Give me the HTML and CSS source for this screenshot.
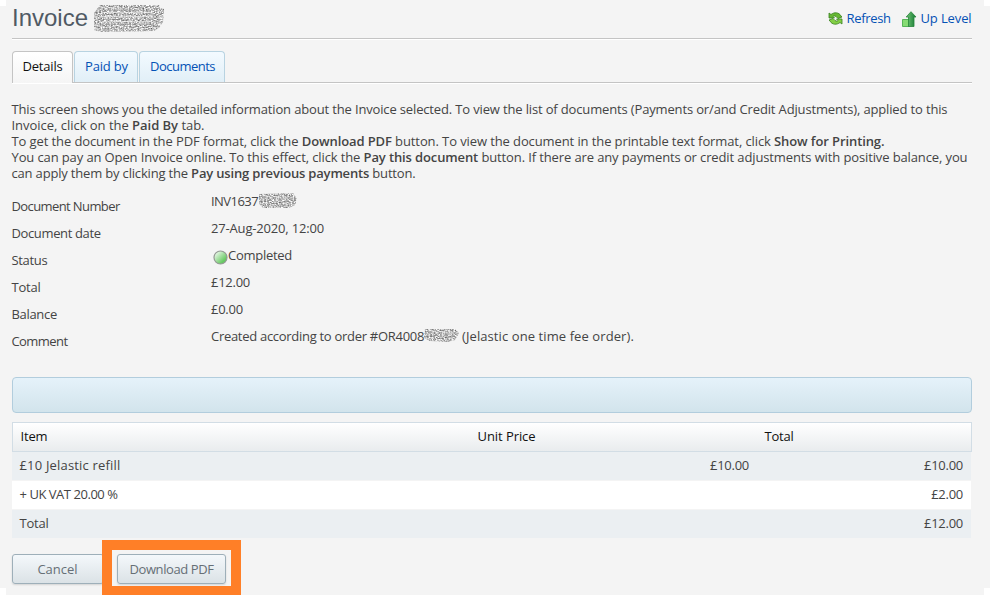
FILE: index.html
```html
<!DOCTYPE html>
<html lang="en">
<head>
<meta charset="utf-8">
<title>Invoice</title>
<link rel="stylesheet" href="styles.css">
</head>
<body>
<svg class="defs" width="0" height="0" aria-hidden="true">
  <defs>
    <filter id="grain" x="0" y="0" width="1" height="1" color-interpolation-filters="sRGB">
      <feTurbulence type="fractalNoise" baseFrequency="0.6 0.85" numOctaves="2" seed="8"/>
      <feColorMatrix values="1.1 0 0 0 0.2  1.1 0 0 0 0.2  1.1 0 0 0 0.2  0 0 0 0 1"/>
      <feComposite in2="SourceGraphic" operator="in"/>
    </filter>
  </defs>
</svg>
<main class="page">
  <header class="top">
    <h1>Invoice</h1>
    <svg class="mask-title" width="72" height="28" viewBox="0 0 72 28">
      <path d="M7 1H66L67 4L71 5L70 18L66 24L61 27L8 28L1 26V9Z" filter="url(#grain)"/>
      <path class="gap" d="M8 8.500H60M7 12.500H60M10 17.500H59"/>
      <path class="streak" d="M8 6.500H60M5 10.500H59M7 15.500H61M9 20.500H61M5.500 17V25"/>
    </svg>
    <nav class="actions">
      <a class="refresh"><svg width="15" height="13" viewBox="0 0 15 13"><path d="M1 1L3 2.5C6 0 11 0 13 4L14 5L10 6.5L8 4.5C6.500 3.500 5.500 4 5 4.500L6.500 6L1 6Z" fill="#66b832" stroke="#38801f" stroke-width=".8"/><path d="M14 12L12 10.500C9 13 4 13 2 9L1 8L5 6.500L7 8.500C8.500 9.500 9.500 9 10 8.500L8.500 7H14Z" fill="#83cf45" stroke="#38801f" stroke-width=".8"/></svg><span class="t-refresh">Refresh</span></a>
      <a class="up"><svg width="15" height="16" viewBox="0 0 15 16"><defs><linearGradient id="ar" x1="0" x2="1"><stop offset="0" stop-color="#75c878"/><stop offset="1" stop-color="#137832"/></linearGradient></defs><path d="M.5 8.500H7V15.500H.5Z" fill="#86dc73" stroke="#57b458"/><path d="M9 .7L14 6H12V15.500H6.500V6H4.200Z" fill="url(#ar)" stroke="#27853a" stroke-width=".8"/></svg><span class="t-up">Up Level</span></a>
    </nav>
  </header>
  <nav class="tabs">
    <a class="tab active t-details">Details</a>
    <a class="tab paid t-paid">Paid by</a>
    <a class="tab docs t-docs">Documents</a>
  </nav>
  <section class="intro">
    <div class="l1">This screen shows you the detailed information about the Invoice selected. To view the list of documents (Payments or/and Credit Adjustments), applied to this</div>
    <div class="l2">Invoice, click on the <b>Paid By</b> tab.</div>
    <div class="l3">To get the document in the PDF format, click the <b>Download PDF</b> button. To view the document in the printable text format, click <b>Show for Printing.</b></div>
    <div class="l4">You can pay an Open Invoice online. To this effect, click the <b>Pay this document</b> button. If there are any payments or credit adjustments with positive balance, you</div>
    <div class="l5">can apply them by clicking the <b>Pay using previous payments</b> button.</div>
  </section>
  <dl class="fields">
    <dt class="t-num">Document Number</dt>
    <dd><span class="t-inv">INV1637</span><svg class="mask-number" width="39" height="15" viewBox="0 0 39 15"><path d="M1 1L35 0L39 6L37 12L31 15H5L1 11Z" filter="url(#grain)"/><path class="streak" d="M4 3L12 10M11 2L19 9M21 2L28 9M29 1L36 10M6 12H30"/></svg></dd>
    <dt class="t-date">Document date</dt>
    <dd class="t-day">27-Aug-2020, 12:00</dd>
    <dt class="t-status">Status</dt>
    <dd><svg class="dot" width="15" height="15" viewBox="0 0 15 15"><defs><linearGradient id="ok" x1="0" y1="0" x2="1" y2="1"><stop offset=".15" stop-color="#e7f7e6"/><stop offset=".75" stop-color="#67c962"/></linearGradient></defs><circle cx="7.500" cy="7.500" r="6.500" fill="url(#ok)" stroke="#939a93" stroke-width="1.200"/></svg><span class="t-comp">Completed</span></dd>
    <dt class="t-total">Total</dt>
    <dd class="t-money">£12.00</dd>
    <dt class="t-status">Balance</dt>
    <dd class="t-money">£0.00</dd>
    <dt class="t-comment">Comment</dt>
    <dd><span class="t-order">Created according to order #OR4008</span><svg class="mask-order" width="35" height="15" viewBox="0 0 35 15"><path d="M1 1H31L35 5L31 12L24 14L6 13L0 10Z" filter="url(#grain)"/><path class="streak" d="M4 3L11 11M12 2L19 12M21 3L27 12M7 8H29"/></svg><span class="t-fee">(Jelastic one time fee order).</span></dd>
  </dl>
  <div class="panel"></div>
  <section class="items">
    <div class="row head"><span class="t-item">Item</span><span class="t-unit">Unit Price</span><span class="t-total">Total</span></div>
    <div class="row"><span class="t-refill">£10 Jelastic refill</span><span class="t-money">£10.00</span><span class="t-money">£10.00</span></div>
    <div class="row even"><span class="t-vat">+ UK VAT 20.00 %</span><span></span><span class="t-money">£2.00</span></div>
    <div class="row"><span class="t-total">Total</span><span></span><span class="t-money">£12.00</span></div>
  </section>
  <div class="buttons">
    <button class="cancel">Cancel</button>
    <div class="highlight"><button class="download">Download PDF</button></div>
  </div>
</main>
</body>
</html>
```
FILE: styles.css
```css
* { box-sizing: border-box; }
html, body { height: 595px; overflow: hidden; }
body {
  margin: 0;
  font: 13px/16px "Open Sans", "Liberation Sans", sans-serif;
  color: #444;
  background:
    linear-gradient(#fff, #fff) 0 0 / 6px 6px no-repeat,
    linear-gradient(#fff, #fff) 0 588px / 6px 7px no-repeat,
    linear-gradient(#fff, #fff) 984px 0 / 6px 6px no-repeat,
    linear-gradient(#fff, #fff) 984px 588px / 6px 7px no-repeat,
    #f4f4f4;
}
svg { display: block; flex: none; }
.defs { position: absolute; }
.streak { fill: none; stroke: #808080; stroke-opacity: .4; stroke-width: 1; stroke-dasharray: 2 1; }
.gap { fill: none; stroke: #eee; stroke-opacity: .6; }
b { font-weight: 600; }
.page { width: 960px; margin-left: 12px; }

.top { display: flex; height: 39px; border-bottom: 1px solid #c4c4c4; box-shadow: 0 1px #fff; }
h1 { margin: 3px 0 0; width: 81px; font: 24px/30px "Liberation Sans", Arial, sans-serif; color: #505a64; }
.mask-title { margin-top: 4px; }
.actions { display: flex; margin-left: auto; color: #0452b5; white-space: nowrap; }
.actions a { display: flex; }
.actions span { margin: 10px 0 0 -.5px; }
.refresh { width: 74px; }
.refresh svg { margin: 12px 4px 0 0; }
.up { width: 70px; }
.up svg { margin: 11px 4px 0 0; }

.tabs { display: flex; gap: 1px; height: 32px; margin-top: 12px; border-bottom: 1px solid #c4c4c4; box-shadow: 0 1px #fff; }
.tab { height: 31px; padding-left: 10px; line-height: 29px; border: 1px solid #b8d3e1; border-bottom: 0; border-radius: 4px 4px 0 0; background: linear-gradient(#f3faff, #e1eff7); color: #0452b5; }
.tab.active { width: 61px; height: 32px; padding-left: 9.500px; border-color: #c4c4c4; background: linear-gradient(#fff, #f5f5f5); color: #111; }
.tab.paid { width: 64px; }
.tab.docs { width: 86px; }

.intro { margin: 18px 0 0 -.5px; white-space: nowrap; }
.fields { display: grid; grid-template-columns: 199px 1fr; grid-auto-rows: 27px; margin: 12px 0 0; white-space: nowrap; }
.fields dt { padding-top: 5px; margin-left: -.5px; }
.fields dd { display: flex; margin: 0; }
.t-inv { width: 47px; }
.t-order { width: 213px; }
.t-fee { margin-left: 3px; }
.dot { margin: 3px 1px 0 1.500px; }
.t-comp { margin-left: -.5px; }

.panel { height: 36px; margin-top: 22px; border: 1px solid #b2cddd; border-radius: 4px; background: linear-gradient(#e5f2fa, #d2e4ec); }
.items { margin-top: 9px; }
.row { display: grid; grid-template-columns: 457px 288px 214px; width: 959px; height: 28px; margin-bottom: 1px; background: #ebeff2; line-height: 26px; }
.row span { padding: 0 8px; text-align: right; }
.row span:first-child { padding-left: 7.500px; text-align: left; }
.row.even { background: #fff; }
.row.head { grid-template-columns: 457px 287px 214px; width: 960px; height: 30px; margin-bottom: 0; border: 1px solid #d2dde5; background: linear-gradient(#fff, #e9ecee); color: #111; }
.row.head span { padding-left: 7.500px; text-align: left; }

.buttons { display: flex; height: 55px; margin-top: 2px; }
.buttons button { height: 30px; padding: 0; border: 1px solid #9eafb9; border-radius: 3px; background: linear-gradient(#f4f8fb, #dbe2e6); box-shadow: 0 1px 2px #0002; font: inherit; color: #666f76; }
.buttons .cancel { flex: none; width: 92px; margin: 14px -2px 0 0; padding-right: 1px; }
.highlight { position: relative; flex: none; width: 139px; height: 56px; padding: 4px 5px; border: 10px solid #ff7f27; }
.buttons .download { width: 109px; letter-spacing: -.41px; }

.l1 { letter-spacing: -.15px; }
.l2 { letter-spacing: -.027px; }
.l3 { letter-spacing: -.102px; }
.l4 { letter-spacing: -.119px; }
.l5 { letter-spacing: -.177px; }
.t-refresh, .t-status { letter-spacing: -.32px; }
.t-up { letter-spacing: -.12px; }
.t-details, .t-paid { letter-spacing: -.18px; }
.t-docs { letter-spacing: -.51px; }
.t-num { letter-spacing: -.6px; }
.t-date { letter-spacing: -.37px; }
.t-day { letter-spacing: -.17px; }
.t-inv { letter-spacing: -.55px; }
.t-comp, .t-money { letter-spacing: -.27px; }
.t-comment { letter-spacing: -.57px; }
.t-order { letter-spacing: -.29px; }
.t-fee { letter-spacing: .09px; }
.t-item { letter-spacing: -.15px; }
.t-unit { letter-spacing: -.07px; }
.t-total { letter-spacing: -.22px; }
.t-refill { letter-spacing: .18px; }
.t-vat { letter-spacing: -.46px; }
```
